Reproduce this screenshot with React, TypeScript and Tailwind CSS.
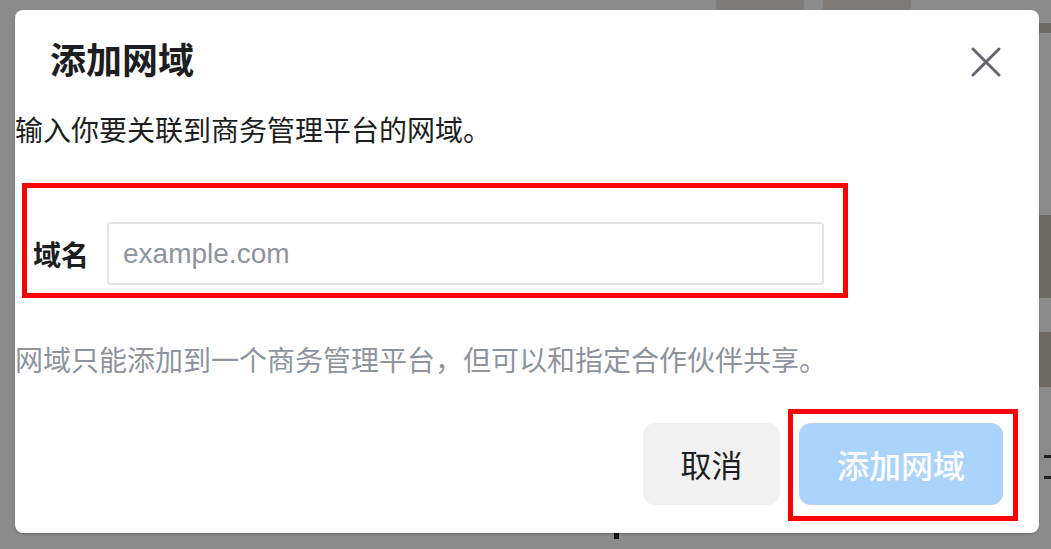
const CloseIcon = () => (
  <svg className="block" width="30" height="30" viewBox="0 0 30 30" fill="none" stroke="currentColor" strokeWidth="3" strokeLinecap="round">
    <path d="M2 2L28 28M28 2L2 28" />
  </svg>
);

const AddDomainDialog = () => {
  return (
    <div className="absolute left-[15px] top-[10px] flex h-[523px] w-[1024px] flex-col rounded-[8px] bg-white shadow-[0_1px_2px_rgba(0,0,0,0.25)]">
      <div className="flex h-[66px] shrink-0 items-start justify-between pl-[35px] pr-[38px] pt-[30px]">
        <h2 className="text-[36px] font-bold leading-none text-[#1c1e21]">添加网域</h2>
        <button className="mt-[7px] block leading-none text-[#606770]">
          <CloseIcon />
        </button>
      </div>

      <p className="mt-[39px] text-[28px] leading-none text-[#1c1e21]">输入你要关联到商务管理平台的网域。</p>

      <div className="ml-[7px] mt-[40px] flex h-[115px] w-[826px] shrink-0 items-end border-[5px] border-[#ff0000] pb-[8px] pl-[6px]">
        <div className="flex items-center gap-[18px]">
          <label className="text-[28px] font-bold leading-none text-[#1c1e21]">域名</label>
          <input
            placeholder="example.com"
            className="h-[63px] w-[717px] rounded-[4px] border-2 border-[#e2e4e8] px-[14px] font-['Liberation_Sans','Noto_Sans_CJK_SC',sans-serif] text-[28px] text-[#1c1e21] outline-none placeholder:text-[#8d949e]"
          />
        </div>
      </div>

      <p className="mt-[47px] text-[28px] leading-none text-[#8d949e]">
        网域只能添加到一个商务管理平台，但可以和指定合作伙伴共享。
      </p>

      <div className="mt-auto flex items-center justify-end gap-[19px] pb-[28px] pr-[36px]">
        <button className="h-[82px] w-[137px] rounded-[12px] bg-[#f1f1f1] text-[31px] text-[#1c1e21]">取消</button>
        <div className="relative">
          <span className="absolute -bottom-[16px] -left-[11px] -right-[15px] -top-[14px] border-[5px] border-[#ff0000]" />
          <button className="relative h-[82px] w-[204px] rounded-[12px] bg-[#abd4fd] text-[32px] font-medium text-white">
            添加网域
          </button>
        </div>
      </div>
    </div>
  );
};

export default function App() {
  return (
    <div className="relative h-[549px] w-[1051px] overflow-hidden bg-[#8b8b8b] font-['Noto_Sans_CJK_SC',sans-serif]">
      {/* page behind the modal */}
      <div className="absolute left-[716px] top-0 h-[12px] w-[88px] bg-[#7e7b78]" />
      <div className="absolute left-[823px] top-0 h-[12px] w-[88px] bg-[#7e7b78]" />
      <div className="absolute left-[1030px] top-[23px] h-[10px] w-[30px] bg-[#6f6b67]" />
      <div className="absolute left-[1025px] top-[215px] h-[83px] w-[40px] rounded-[10px] bg-[#6e6a66]" />
      <div className="absolute left-[1030px] top-[332px] h-[55px] w-[30px] bg-[#6e6a66]" />
      <div className="absolute left-[1044px] top-[455px] h-[3px] w-[7px] bg-[#222]" />
      <div className="absolute left-[1044px] top-[476px] h-[3px] w-[7px] bg-[#222]" />
      <div className="absolute left-[614px] top-[530px] h-[9px] w-[5px] bg-[#111]" />
      <AddDomainDialog />
    </div>
  );
}
